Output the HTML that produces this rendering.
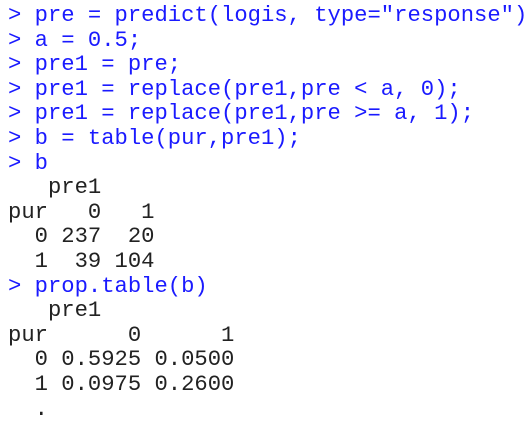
<!DOCTYPE html>
<html><head><style>
html,body{margin:0;padding:0;background:#fff;width:528px;height:400px;overflow:hidden}
pre{margin:0;position:absolute;left:8px;top:4px;font-family:"Liberation Mono",monospace;font-size:22.2px;line-height:24.6px;color:#222}
.c{color:#1a1aff}
</style></head><body>
<pre><span class="c">&gt; pre = predict(logis, type="response")
&gt; a = 0.5;
&gt; pre1 = pre;
&gt; pre1 = replace(pre1,pre &lt; a, 0);
&gt; pre1 = replace(pre1,pre &gt;= a, 1);
&gt; b = table(pur,pre1);
&gt; b</span>
   pre1
pur   0   1
  0 237  20
  1  39 104
<span class="c">&gt; prop.table(b)</span>
   pre1
pur      0      1
  0 0.5925 0.0500
  1 0.0975 0.2600
  .</pre>
</body></html>
